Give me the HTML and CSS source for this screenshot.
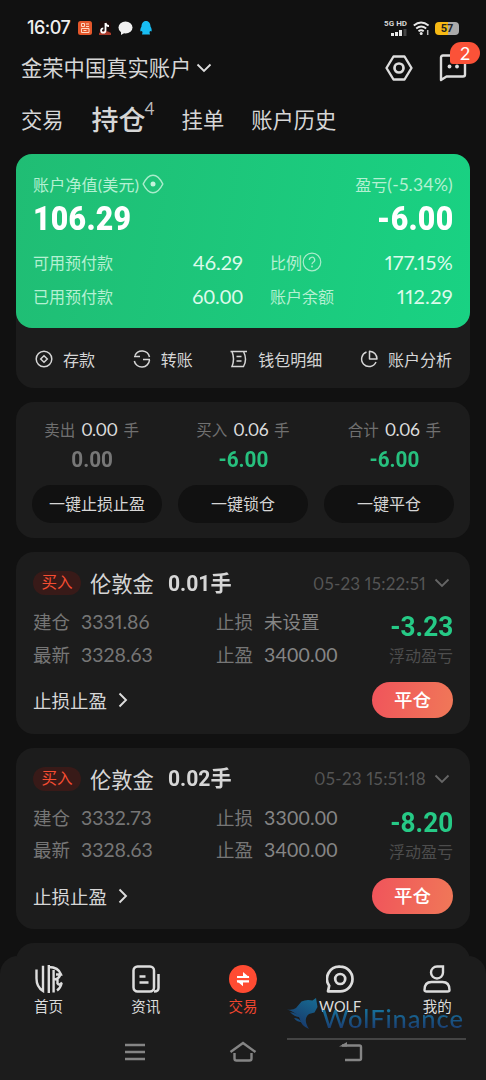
FILE: index.html
```
<!DOCTYPE html>
<html lang="zh-CN">
<head>
<meta charset="utf-8">
<title>持仓</title>
<link rel="stylesheet" href="styles.css">
</head>
<body>
<div class="screen">
  <header class="status">
    <span class="clock">16:07</span>
    <svg class="apps" width="76" height="16" viewBox="0 0 76 16">
      <rect x="0" y="1" width="14" height="14" rx="2.5" fill="#e4572b"/>
      <path d="M3.5 3.5h3v3h-3zM8 4h3M8 6.500h3M3.500 8.500h7.500v4h-7.500zM5.500 10.500h3" fill="none" stroke="#ffd9c4" stroke-width="1"/>
      <rect x="21" y="1" width="12" height="14" rx="2" fill="#1b0c0c"/><path d="M21 13q6-4 12 0v2h-12z" fill="#a83a2b"/>
      <path d="M27.500 3v7.500a2.200 2.200 0 1 1-2.200-2.200M27.500 3q.5 3 3.500 3" fill="none" stroke="#fff" stroke-width="1.800"/>
      <ellipse cx="47.500" cy="7.500" rx="7" ry="6" fill="#f0f0f0"/><path d="M43 11l0 4 5-3z" fill="#f0f0f0"/>
      <path d="M68 1c-3 0-4.500 2.500-4.500 5.500-1 1.500-1.500 3.500-1 5l1.500-.5.5 1.500-.5 2h8l-.5-2 .5-1.500 1.500.5c.5-1.500 0-3.500-1-5C72.500 3.500 71 1 68 1z" fill="#18bdf2"/>
    </svg>
    <div class="signal"><span>5G HD</span>
      <svg width="16" height="7" viewBox="0 0 16 7"><path d="M0 4h3v3H0zM4 3h3v4H4zM8 1h3v6H8z" fill="#e8e8e8"/><path d="M12.500 0h3v7h-3z" fill="#444"/></svg>
    </div>
    <svg class="wifi" width="17" height="14" viewBox="0 0 17 14"><g fill="none" stroke="#e8e8e8" stroke-width="1.900"><path d="M.8 4.500q7.200-6 14.800 0M3.200 7.500q5-4 10 0M5.500 10.200q2.700-2 5.200 0"/></g><circle cx="8.200" cy="12.400" r="1.500" fill="#e8e8e8"/><path d="M14.700 9v5" stroke="#bbb" stroke-width="1.500"/></svg>
    <div class="battery"><span>57</span></div>
  </header>

  <div class="account">
    <span class="acc-name">金荣中国真实账户</span>
    <svg class="acc-arrow" width="16" height="10" viewBox="0 0 16 10"><path d="M1.500 1.500L8 8l6.500-6.500" fill="none" stroke="#ddd" stroke-width="1.800"/></svg>
    <svg class="hex" width="28" height="26" viewBox="0 0 28 26"><path d="M8.500 1.500h11L26.500 13l-7 11.500h-11L1.500 13z" fill="none" stroke="#ddd" stroke-width="2.400" stroke-linejoin="round"/><circle cx="14" cy="13" r="4.500" fill="none" stroke="#ddd" stroke-width="2.700"/></svg>
    <div class="msg">
      <svg width="28" height="28" viewBox="0 0 28 28"><path d="M2 26V3.500Q2 1.500 4 1.500h20q2 0 2 2v17q0 2-2 2H7.500z" fill="none" stroke="#ddd" stroke-width="2.400" stroke-linejoin="round"/><circle cx="10.500" cy="12.500" r="1.900" fill="#ddd"/><circle cx="18" cy="12.500" r="1.900" fill="#ddd"/></svg>
      <span class="badge">2</span>
    </div>
  </div>

  <nav class="tabs">
    <span class="tab">交易</span>
    <span class="tab active">持仓<sup>4</sup></span>
    <span class="tab">挂单</span>
    <span class="tab">账户历史</span>
  </nav>

  <main class="content">
    <section class="wallet">
      <div class="equity">
        <div class="eq-top">
          <span class="lbl">账户净值(美元)<svg width="22" height="20" viewBox="0 0 22 20"><path d="M1.200 10Q5.500 1.200 11 1.200t9.800 8.800q-4.300 8.800-9.800 8.800T1.200 10z" fill="none" stroke="#a9eccb" stroke-width="1.500"/><circle cx="11" cy="10" r="2.500" fill="#c4f3dc"/></svg></span>
          <span class="lbl">盈亏<i>(-5.34%)</i></span>
        </div>
        <div class="eq-main"><b>106.29</b><b>-6.00</b></div>
        <div class="eq-grid">
          <span class="lbl">可用预付款</span><span class="num">46.29</span>
          <span class="lbl">比例<svg width="20" height="20" viewBox="0 0 20 20"><circle cx="10" cy="10" r="8.800" fill="none" stroke="#a9eccb" stroke-width="1.200"/><path d="M7.300 8a2.700 2.700 0 1 1 4 2.300q-1.300.8-1.300 2" fill="none" stroke="#a9eccb" stroke-width="1.300"/><circle cx="10" cy="14.500" r=".9" fill="#a9eccb"/></svg></span><span class="num wide">177.15%</span>
          <span class="lbl">已用预付款</span><span class="num tab-num">60.00</span>
          <span class="lbl">账户余额</span><span class="num wide">112.29</span>
        </div>
      </div>
      <div class="actions">
        <span><svg width="18" height="18" viewBox="0 0 18 18"><g fill="none" stroke="#d6d6d6" stroke-width="1.500"><circle cx="9" cy="9" r="7.800"/><path d="M9 5.700L12.300 9 9 12.300 5.700 9z"/></g></svg>存款</span>
        <span><svg width="18" height="18" viewBox="0 0 18 18"><g fill="none" stroke="#d6d6d6" stroke-width="1.500"><path d="M1 6.500h6M2 5.500a7.700 7.700 0 0 1 14.500 1.500M17 9.500h-7M16.500 10a7.700 7.700 0 0 1-15.200 1"/></g></svg>转账</span>
        <span><svg width="18" height="18" viewBox="0 0 18 18"><path d="M.5 1.500h16.500M2 1.500Q5 9 2 16.500h11.500q4-7 0-15M6.500 6.500h5M6.500 11h5" fill="none" stroke="#d6d6d6" stroke-width="1.500"/></svg>钱包明细</span>
        <span><svg width="18" height="18" viewBox="0 0 18 18"><path d="M6.500 2a7.500 7.500 0 1 0 9.500 10M9.500 1.300V9H17q-.5-7-7.500-7.700z" fill="none" stroke="#d6d6d6" stroke-width="1.500" stroke-linejoin="round"/></svg>账户分析</span>
      </div>
    </section>

    <section class="summary">
      <div class="totals">
        <div class="col"><p>卖出<i>0.00</i>手</p><b class="zero">0.00</b></div>
        <div class="col"><p>买入<i>0.06</i>手</p><b>-6.00</b></div>
        <div class="col"><p>合计<i>0.06</i>手</p><b>-6.00</b></div>
      </div>
      <div class="pills"><span>一键止损止盈</span><span>一键锁仓</span><span>一键平仓</span></div>
    </section>

    <section class="position">
      <div class="p-head"><span class="side">买入</span><span class="name">伦敦金</span><b class="lots">0.01手</b><span class="time">05-23 15:22:51</span><svg width="16" height="10" viewBox="0 0 16 10"><path d="M1.500 1.500L8 8l6.500-6.500" fill="none" stroke="#666" stroke-width="1.800"/></svg></div>
      <div class="p-body">
        <div class="prices"><span>建仓</span><i>3331.86</i><span>止损</span><i class="text">未设置</i><span>最新</span><i>3328.63</i><span>止盈</span><i class="tab-num">3400.00</i></div>
        <div class="pnl"><b>-3.23</b><span>浮动盈亏</span></div>
      </div>
      <div class="p-foot"><span>止损止盈</span><svg width="10" height="16" viewBox="0 0 10 16"><path d="M1.500 1.500L8 8l-6.500 6.500" fill="none" stroke="#ddd" stroke-width="1.900"/></svg><span class="close">平仓</span></div>
    </section>

    <section class="position">
      <div class="p-head"><span class="side">买入</span><span class="name">伦敦金</span><b class="lots">0.02手</b><span class="time late">05-23 15:51:18</span><svg width="16" height="10" viewBox="0 0 16 10"><path d="M1.500 1.500L8 8l6.500-6.500" fill="none" stroke="#666" stroke-width="1.800"/></svg></div>
      <div class="p-body">
        <div class="prices"><span>建仓</span><i>3332.73</i><span>止损</span><i class="tab-num">3300.00</i><span>最新</span><i>3328.63</i><span>止盈</span><i class="tab-num">3400.00</i></div>
        <div class="pnl"><b>-8.20</b><span>浮动盈亏</span></div>
      </div>
      <div class="p-foot"><span>止损止盈</span><svg width="10" height="16" viewBox="0 0 10 16"><path d="M1.500 1.500L8 8l-6.500 6.500" fill="none" stroke="#ddd" stroke-width="1.900"/></svg><span class="close">平仓</span></div>
    </section>
    <section class="position next"></section>
  </main>

  <footer class="bottom">
    <div class="menu">
      <span><svg width="28" height="28" viewBox="0 0 28 28"><g fill="none" stroke="#ddd" stroke-width="2.400"><path d="M1.500 4.500v9Q1.500 22 8 26V.8M13.800 0v28M13.500 2q10 0 12.500 7.500H21M18.600 5v22.500M18.500 14.500q5 0 7-5M22.500 14v4.500q1.500 2.500 4.500-1M22 25.500q3.500-2.500 4.500-7"/></g></svg>首页</span>
      <span><svg width="28" height="28" viewBox="0 0 28 28"><g fill="none" stroke="#ddd" stroke-width="2.500"><rect x="1.500" y="1.500" width="20.500" height="25" rx="4"/><path d="M7.500 11.500h6M7.500 17.500h9M26.500 9v14q0 3.500-4.500 3.500"/></g></svg>资讯</span>
      <span class="on"><svg width="28" height="28" viewBox="0 0 28 28"><circle cx="14" cy="14" r="14" fill="#ff4b32"/><path d="M8 12h12M8 16.300h12" stroke="#fff" stroke-width="2.200"/><path d="M14 7l6.500 5.500H14zM14 21.300l-6.500-5.500H14z" fill="#fff"/></svg>交易</span>
      <span><svg width="28" height="28" viewBox="0 0 28 28"><g fill="none" stroke="#ddd" stroke-width="2.700" stroke-linejoin="round"><path d="M14.200 1.700a12.200 12.200 0 1 1 0 24.600H2l1.200-5.500A12.200 12.200 0 0 1 14.200 1.700z"/><circle cx="14.200" cy="14" r="5"/></g></svg>WOLF</span>
      <span><svg width="28" height="28" viewBox="0 0 28 28"><g fill="none" stroke="#ddd" stroke-width="2.400"><path d="M14 1.500h6V7.500a6 6 0 1 1-6-6z"/><path d="M8.500 17h11q7 0 7 8 0 1.500-2 1.500h-21q-2 0-2-1.500 0-8 7-8z"/></g></svg>我的</span>
    </div>
    <div class="sys">
      <svg width="22" height="18" viewBox="0 0 22 18"><path d="M1 2h20M1 9h20M1 16h20" stroke="#858585" stroke-width="2.400"/></svg>
      <svg width="28" height="22" viewBox="0 0 28 22"><path d="M1.500 11L14 2l12.500 9M5.500 12v5.500q0 2 2 2h13q2 0 2-2V12" fill="none" stroke="#858585" stroke-width="2.400"/></svg>
      <svg width="24" height="20" viewBox="0 0 24 20"><path d="M3 3.500h17.500q1.500 0 1.500 1.500v11.500q0 1.500-1.500 1.500H6" fill="none" stroke="#858585" stroke-width="2.400"/><path d="M0 4.500L8 0v4.500z" fill="#858585"/></svg>
    </div>
  </footer>

  <div class="watermark">
    <svg width="32" height="32" viewBox="0 0 32 32"><defs><linearGradient id="wolf" x1="1" y1="0" x2="0.500" y2="1"><stop offset="0" stop-color="#176d94"/><stop offset="1" stop-color="#18386a"/></linearGradient></defs><path d="M29 0l1.500 9-3 5.500-5.500 1.500q-6.500 5 0 15-8-3-9.500-11Q9 14 0 11.500q6 1 9-1.500l5.500-6.500q5-2.500 11-1z" fill="url(#wolf)"/><path d="M3 14q7 1 10 5-6 0-10-5zM7 20q5 0 7.500 4-5 0-7.500-4z" fill="#184a78"/></svg>
    <span>WolFinance</span>
  </div>
</div>
</body>
</html>
```
FILE: styles.css
```
* { box-sizing: border-box; }
body { margin: 0; background: #111; }
i { font-style: normal; }
p { margin: 0; }
svg { display: block; flex: none; }

.screen {
  position: relative;
  width: 486px;
  height: 1080px;
  overflow: hidden;
  display: flex;
  flex-direction: column;
  background: #111;
  color: #d6d6d6;
  font-family: Lato, "Noto Sans CJK SC", sans-serif;
  font-feature-settings: "pnum";
  white-space: nowrap;
}
.tab-num { font-feature-settings: normal; letter-spacing: .2px; }

.status { height: 46px; display: flex; align-items: center; padding: 10px 27px 0; }
.clock { width: 51px; font: 500 18px/20px Inter, sans-serif; letter-spacing: -.5px; color: #eee; }
.signal { display: flex; flex-direction: column; align-items: flex-end; margin-left: auto; gap: 1px; }
.signal span { font: 700 8px/8px Roboto, sans-serif; }
.wifi { margin-left: 6px; }
.battery {
  width: 24px; height: 13px; margin: 0 0 0 5px; border-radius: 4px;
  background: linear-gradient(90deg, #f6b914 55%, #aaa 55%);
  color: #222; text-align: center; font: 700 11px/13px Roboto, sans-serif;
}

.account { height: 44px; flex: none; display: flex; align-items: center; padding: 0 19px 0 21px; font-size: 21.300px; }
.acc-name { padding-bottom: 3px; }
.acc-arrow { margin-left: 5px; }
.hex { margin-left: auto; margin-right: 2px; }
.msg { position: relative; margin-left: 24px; }
.badge {
  position: absolute; left: 11px; top: -12px; width: 30px; height: 22px;
  border-radius: 11px 11px 11px 3px; background: #fb5238; color: #fff;
  text-align: center; font-size: 18px; line-height: 22px;
}

.tabs { height: 64px; display: flex; padding-left: 21px; font-size: 21.300px; line-height: 60px; }
.tab { margin-right: 28px; }
.tab.active { position: relative; font-size: 27px; line-height: 59px; margin-right: 36px; font-weight: 500; }
.tab sup { position: absolute; left: 53px; top: -9px; font-size: 17px; line-height: 56px; font-weight: 400; color: #bbb; }
.tab:nth-child(3) { margin-right: 27px; }

.content { height: 802px; flex: none; overflow: hidden; padding: 0 16px; display: flex; flex-direction: column; gap: 14px; }
.wallet, .summary, .position { flex: none; background: #1c1c1c; border-radius: 18px; }
.wallet { height: 234px; }
.equity { height: 174px; padding: 19px 17px 0; border-radius: 16px; background: linear-gradient(100deg, #20bd74, #19d283); color: #fff; }
.lbl { display: flex; align-items: center; color: #b4f0d2; font-size: 16px; }
.lbl i { font-size: 17.500px; letter-spacing: .2px; }
.eq-top { display: flex; justify-content: space-between; height: 22px; }
.eq-top .lbl:first-child { letter-spacing: .2px; }
.eq-top svg { margin-left: 3px; }
.eq-main { display: flex; justify-content: space-between; height: 47px; font: 700 32.500px/49px Roboto, sans-serif; letter-spacing: .3px; }
.eq-main b { transform: scaleX(.93); transform-origin: right; }
.eq-main b:first-child { transform-origin: left; }
.eq-grid { display: grid; grid-template-columns: 110px 100px 92px 118px; grid-auto-rows: 34px; margin-top: 3px; align-items: center; }
.eq-grid .lbl:nth-child(4n+3) { padding-left: 27px; }
.num { text-align: right; font-size: 20px; color: #dcfaeb; }
.num.tab-num { letter-spacing: 0; }
.num.wide { letter-spacing: .3px; }
.actions { height: 61px; display: flex; justify-content: space-between; align-items: center; padding: 0 18px 0 19px; font-size: 16px; }
.actions span { display: flex; gap: 10px; align-items: center; }

.summary { height: 136px; padding-top: 15px; }
.totals { display: grid; grid-template-columns: repeat(3, 1fr); }
.col { display: flex; flex-direction: column; align-items: center; }
.col p { font-size: 15.500px; line-height: 26px; color: #707070; }
.col i { font-size: 17.500px; color: #dcdcdc; margin: 0 6px; letter-spacing: -.5px; }
.col b { font: 700 22px/33px Roboto, sans-serif; transform: scaleX(.94); color: #27c07e; }
.col .zero { color: #777; }
.pills { display: flex; justify-content: space-between; padding: 0 16px; margin-top: 9px; }
.pills span { width: 130px; height: 38px; border-radius: 19px; background: #111; text-align: center; font-size: 16px; line-height: 37px; }

.position { height: 181.500px; padding: 0 17px; }
.p-head { height: 52px; display: flex; align-items: center; padding-top: 10px; }
.side { width: 48px; height: 24px; border-radius: 12px; background: #381a18; color: #f54d32; font-size: 15.500px; line-height: 23px; text-align: center; }
.name { width: 78px; margin-left: 9px; font-size: 21.300px; padding-bottom: 1px; }
.lots { font: 700 22px/30px Roboto, "Noto Sans CJK SC", sans-serif; transform: scaleX(.96); transform-origin: left; padding-top: 1px; }
.time { margin-left: auto; margin-right: 8px; font-size: 17px; letter-spacing: .2px; color: #555; }
.time.late { letter-spacing: .3px; }
.p-head svg { margin-right: 3px; }
.p-body { display: flex; justify-content: space-between; }
.prices { display: grid; grid-template-columns: 48px 135px 48px 90px; grid-auto-rows: 32.500px; align-items: center; margin-top: 2px; font-size: 18.500px; line-height: 32px; color: #767676; }
.prices i { font-size: 19.500px; }
.prices i.text { font-size: 18.500px; }
.prices i:nth-child(4n) { color: #858585; }
.pnl { display: flex; flex-direction: column; align-items: flex-end; }
.pnl b { font: 700 27.500px/46px Roboto, sans-serif; color: #26ca86; transform: scaleX(.95); transform-origin: right; }
.pnl span { font-size: 16px; line-height: 11px; height: 13px; color: #4d4d4d; }
.p-foot { height: 36px; margin-top: 11px; display: flex; align-items: center; font-size: 18.500px; }
.p-foot svg { margin-left: 11px; }
.close { width: 81px; height: 36px; margin: 0 0 0 auto; border-radius: 18px; background: linear-gradient(100deg, #f0545b, #f07858); color: #fff; text-align: center; line-height: 36px; font-weight: 500; }
.next { border-radius: 18px 18px 0 0; }

.bottom { height: 124px; flex: none; background: #1c1c1c; border-radius: 18px 18px 0 0; }
.menu { display: grid; grid-template-columns: repeat(5, 97.200px); padding-top: 9px; height: 82px; }
.menu span { display: flex; flex-direction: column; align-items: center; font-size: 14.500px; line-height: 27px; color: #dcdcdc; }
.menu .on { color: #ef452e; }
.sys { display: flex; align-items: center; justify-content: space-between; height: 28px; padding: 0 123px 0 124px; }
.watermark { position: absolute; left: 287px; top: 998px; width: 179px; height: 42px; border-bottom: 2px solid #444; display: flex; }
.watermark span { margin-left: 3px; font: 500 25.500px/40px Lato, sans-serif; letter-spacing: .9px; background: linear-gradient(#17709a 30%, #1b3a6e 80%); background-clip: text; -webkit-background-clip: text; color: transparent; }
```
